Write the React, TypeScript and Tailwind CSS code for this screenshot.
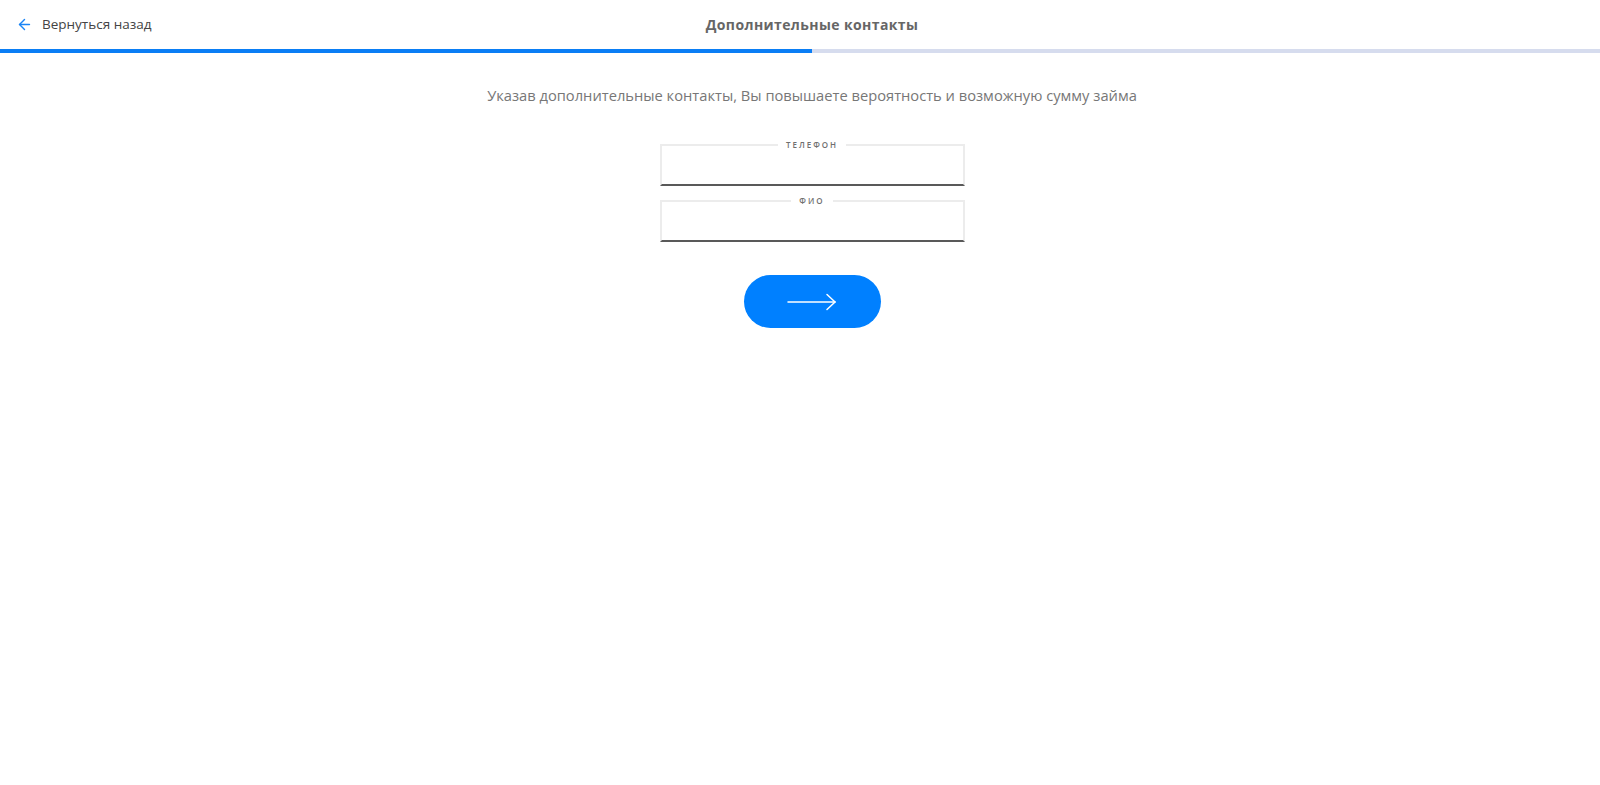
import { ArrowLeft } from "lucide-react";

function Field({ label }: { label: string }) {
  return (
    <fieldset className="h-[45px] w-[305px] border-x-2 border-t-2 border-b-2 border-x-[#ececec] border-t-[#ececec] border-b-[#595959]">
      <legend className="mx-auto px-2 text-[8px] leading-[8px] font-semibold tracking-[2px] text-[#6f6f6f]">
        {label}
      </legend>
    </fieldset>
  );
}

export default function App() {
  return (
    <div className="min-h-[785px] w-full overflow-hidden bg-white" style={{ fontFamily: '"Open Sans", "Noto Sans", sans-serif' }}>
      <div className="w-[1624px]">
        <header className="flex h-[49px] items-center">
          <button className="flex w-[200px] items-center gap-[9px] pl-[16px] text-[13.5px] text-[#444]">
            <ArrowLeft size={17} strokeWidth={2} className="text-[#1a84f5]" />
            <span>Вернуться назад</span>
          </button>
          <h1 className="flex-1 text-center text-[14px] font-bold tracking-[0.4px] text-[#666]">
            Дополнительные контакты
          </h1>
          <div className="w-[200px]" />
        </header>
        <div className="flex h-[4px] w-full bg-[#d6dcee]">
          <div className="h-full w-1/2 bg-[#0a7ef5]" />
        </div>

        <main className="flex flex-col items-center">
          <p className="mt-[31px] text-[14.7px] leading-[22px] text-[#777]">
            Указав дополнительные контакты, Вы повышаете вероятность и возможную сумму займа
          </p>
          <div className="mt-[35px] flex flex-col gap-[11px]">
            <Field label="ТЕЛЕФОН" />
            <Field label="ФИО" />
          </div>
          <button className="mt-[33px] flex h-[53px] w-[137px] items-center justify-center rounded-full bg-[#0080ff]">
            <svg width="50" height="18" viewBox="0 0 50 18" fill="none" stroke="white" strokeWidth="1.5" strokeLinecap="round">
              <path d="M1 9h47" />
              <path d="M40 1.5 48 9l-8 7.5" />
            </svg>
          </button>
        </main>
      </div>
    </div>
  );
}
